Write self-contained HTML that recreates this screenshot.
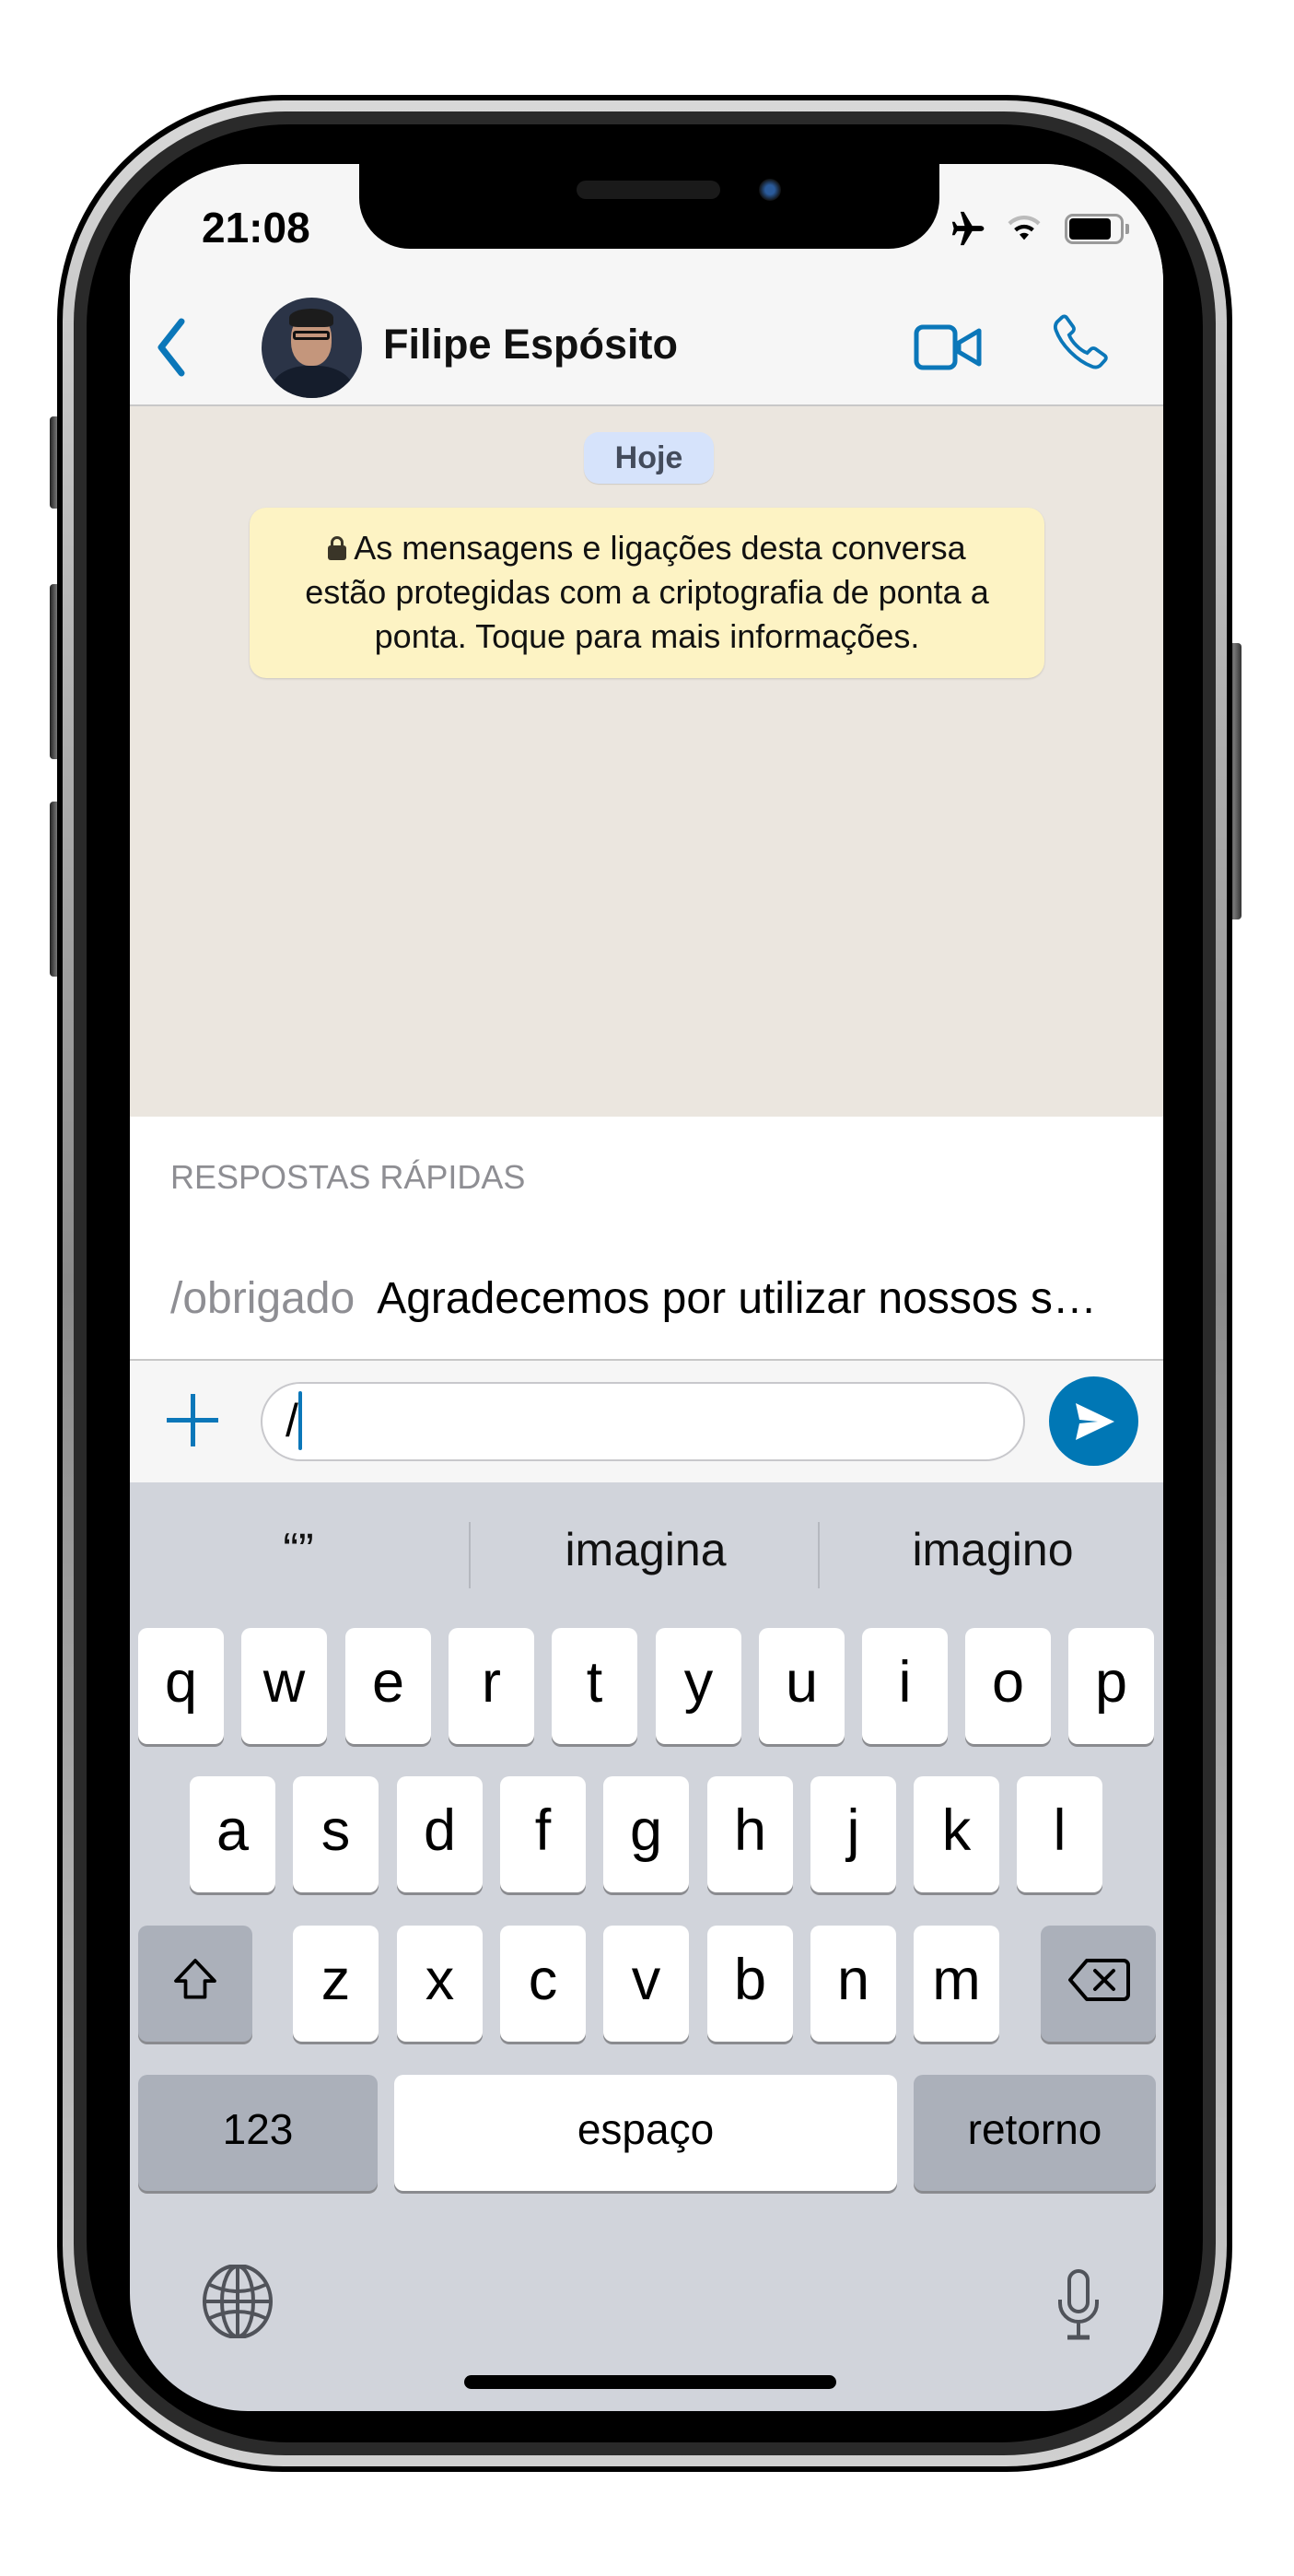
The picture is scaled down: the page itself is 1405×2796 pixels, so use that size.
<!DOCTYPE html>
<html><head><meta charset="utf-8"><style>
*{margin:0;padding:0;box-sizing:border-box}
body{width:1405px;height:2796px;background:#fff;position:relative;overflow:hidden;font-family:"Liberation Sans",sans-serif}
.a{position:absolute}
.btn{position:absolute;background:linear-gradient(90deg,#222,#777,#333);border-radius:4px}
.key{position:absolute;width:93px;height:126px;background:#fff;border-radius:10px;box-shadow:0 3px 0 #8a8b8f;font-size:63px;color:#000;text-align:center;line-height:118px}
.gk{background:#abb0ba}
.sug{position:absolute;top:1653px;font-size:50px;color:#111;text-align:center;width:370px}
</style></head><body>
<div class="btn" style="left:54px;top:452px;width:16px;height:100px"></div>
<div class="btn" style="left:54px;top:634px;width:16px;height:190px"></div>
<div class="btn" style="left:54px;top:870px;width:16px;height:190px"></div>
<div class="btn" style="left:1332px;top:698px;width:16px;height:300px"></div>
<div class="a" style="left:62px;top:103px;width:1276px;height:2580px;border-radius:245px;background:#000"></div>
<div class="a" style="left:68px;top:109px;width:1264px;height:2568px;border-radius:240px;background:linear-gradient(180deg,#d8d8d8,#8a8a8a 50%,#d0d0d0)"></div>
<div class="a" style="left:80px;top:121px;width:1240px;height:2544px;border-radius:230px;background:#2a2a2a"></div>
<div class="a" style="left:94px;top:135px;width:1212px;height:2516px;border-radius:220px;background:#000"></div>
<div class="a" style="left:141px;top:178px;width:1122px;height:2439px;border-radius:128px;overflow:hidden;background:#d1d4db">
  <div class="a" style="left:0;top:0;width:1122px;height:263px;background:#f6f6f6;border-bottom:2px solid #c8c8c8"></div>
  <div class="a" style="left:0;top:263px;width:1122px;height:771px;background:#ebe6df"></div>
  <div class="a" style="left:0;top:1034px;width:1122px;height:265px;background:#fff;border-bottom:2px solid #c8c8c8"></div>
  <div class="a" style="left:0;top:1299px;width:1122px;height:132px;background:#f6f6f6"></div>
</div>
<div class="a" style="left:390px;top:170px;width:630px;height:100px;background:#000;border-radius:0 0 55px 55px"></div>
<div class="a" style="left:626px;top:196px;width:156px;height:20px;background:#1a1a1a;border-radius:10px"></div>
<div class="a" style="left:824px;top:194px;width:24px;height:24px;background:radial-gradient(circle,#2a5a9a 30%,#111 70%);border-radius:50%"></div>
<div class="a" style="left:219px;top:220px;font-size:46px;font-weight:bold;color:#000">21:08</div>
<svg class="a" style="left:1030px;top:228px" width="44" height="40" viewBox="0 0 24 22"><path d="M21 11c0-1-1-1.6-2-1.6h-5L9 1H7l2.5 8.4H5L3.5 7H2l1 4-1 4h1.5L5 12.6h4.5L7 21h2l5-8.4h5c1 0 2-.6 2-1.6z" fill="#000"/></svg>
<svg class="a" style="left:1092px;top:230px" width="40" height="34" viewBox="0 0 24 20"><path d="M12 18l3-3.4a4.5 4.5 0 0 0-6 0z" fill="#000"/><path d="M5.5 10.7a9.5 9.5 0 0 1 13 0l-1.7 1.9a7 7 0 0 0-9.6 0z" fill="#000"/><path d="M1.5 6.5a15 15 0 0 1 21 0l-1.7 1.9a12.5 12.5 0 0 0-17.6 0z" fill="#bbb"/></svg>
<div class="a" style="left:1156px;top:232px;width:64px;height:33px;border:3px solid #999;border-radius:9px"></div>
<div class="a" style="left:1161px;top:237px;width:45px;height:23px;background:#000;border-radius:4px"></div>
<div class="a" style="left:1222px;top:243px;width:4px;height:11px;background:#999;border-radius:0 2px 2px 0"></div>
<svg class="a" style="left:165px;top:345px" width="40" height="64" viewBox="0 0 40 64"><path d="M32 4L10 32l22 28" stroke="#0b77b9" stroke-width="7" fill="none" stroke-linecap="round" stroke-linejoin="round"/></svg>
<div class="a" style="left:284px;top:323px;width:109px;height:109px;border-radius:50%;overflow:hidden;background:#2b3447">
  <div class="a" style="left:32px;top:18px;width:44px;height:56px;border-radius:45%;background:#c4967c"></div>
  <div class="a" style="left:30px;top:12px;width:48px;height:20px;border-radius:50% 50% 20% 20%;background:#1c1c1c"></div>
  <div class="a" style="left:34px;top:36px;width:40px;height:10px;border:3px solid #111;border-radius:3px"></div>
  <div class="a" style="left:10px;top:74px;width:90px;height:60px;border-radius:45% 45% 0 0;background:#151d2c"></div>
</div>
<div class="a" style="left:416px;top:348px;font-size:45px;font-weight:bold;color:#111">Filipe Espósito</div>
<svg class="a" style="left:992px;top:352px" width="76" height="50" viewBox="0 0 76 50"><rect x="3" y="3" width="42" height="44" rx="7" stroke="#0b77b9" stroke-width="5" fill="none"/><path d="M49 20l22-13v36L49 30z" stroke="#0b77b9" stroke-width="5" fill="none" stroke-linejoin="round"/></svg>
<svg class="a" style="left:1140px;top:338px" width="66" height="66" viewBox="0 0 24 24"><path d="M6.6 2.5l2.6 3.6c.4.6.3 1.4-.2 1.9L7.6 9.3c.9 2.6 4.3 6.1 7.1 7.1l1.4-1.4c.5-.5 1.3-.6 1.9-.2l3.6 2.6c.6.4.7 1.3.2 1.8l-1.7 1.9c-.9 1-2.4 1.2-3.6.6C10.7 19.5 4.5 13.3 2.4 7.5c-.5-1.2-.3-2.7.7-3.6l1.7-1.6c.5-.5 1.4-.4 1.8.2z" stroke="#0b77b9" stroke-width="1.4" fill="none"/></svg>
<div class="a" style="left:634px;top:469px;width:141px;height:56px;background:#d6e3fb;border-radius:16px;box-shadow:0 1px 1px rgba(0,0,0,.12);font-size:34px;font-weight:bold;color:#444c5c;text-align:center;line-height:56px">Hoje</div>
<div class="a" style="left:271px;top:551px;width:863px;height:185px;background:#fdf3c4;border-radius:18px;box-shadow:0 1px 2px rgba(0,0,0,.15);font-size:36px;color:#111;text-align:center;line-height:48px;padding-top:20px;white-space:nowrap">
<span style="display:inline-block;width:20px;height:26px;position:relative;margin-right:8px;vertical-align:-1px"><span class="a" style="left:3px;top:0;width:14px;height:16px;border:3px solid #3a3528;border-radius:7px 7px 0 0"></span><span class="a" style="left:0;top:10px;width:20px;height:16px;background:#3a3528;border-radius:3px"></span></span>As mensagens e ligações desta conversa<br>estão protegidas com a criptografia de ponta a<br>ponta. Toque para mais informações.</div>
<div class="a" style="left:185px;top:1257px;font-size:36px;color:#8e8e93">RESPOSTAS RÁPIDAS</div>
<div class="a" style="left:185px;top:1382px;font-size:48px;color:#8e8e93;white-space:nowrap">/obrigado&nbsp; <span style="color:#000">Agradecemos por utilizar nossos s…</span></div>
<div class="a" style="left:181px;top:1539px;width:56px;height:5px;background:#0b77b9"></div>
<div class="a" style="left:207px;top:1513px;width:5px;height:57px;background:#0b77b9"></div>
<div class="a" style="left:283px;top:1500px;width:830px;height:86px;background:#fff;border:2px solid #c8c8cc;border-radius:43px"></div>
<div class="a" style="left:310px;top:1513px;font-size:50px;color:#000">/</div>
<div class="a" style="left:324px;top:1510px;width:4px;height:64px;background:#0b77b9;border-radius:2px"></div>
<div class="a" style="left:1139px;top:1494px;width:97px;height:97px;background:#0077b5;border-radius:50%"></div>
<svg class="a" style="left:1160px;top:1515px" width="56" height="56" viewBox="0 0 56 56"><path d="M8 8l42 20L8 48l4-18 20-2-20-2z" fill="#fff"/></svg>
<div class="sug" style="left:139px">“”</div>
<div class="a" style="left:509px;top:1652px;width:2px;height:72px;background:#b5b8bf"></div>
<div class="sug" style="left:516px">imagina</div>
<div class="a" style="left:888px;top:1652px;width:2px;height:72px;background:#b5b8bf"></div>
<div class="sug" style="left:893px">imagino</div>
<div class="key" style="left:150px;top:1767px">q</div>
<div class="key" style="left:262px;top:1767px">w</div>
<div class="key" style="left:375px;top:1767px">e</div>
<div class="key" style="left:487px;top:1767px">r</div>
<div class="key" style="left:599px;top:1767px">t</div>
<div class="key" style="left:712px;top:1767px">y</div>
<div class="key" style="left:824px;top:1767px">u</div>
<div class="key" style="left:936px;top:1767px">i</div>
<div class="key" style="left:1048px;top:1767px">o</div>
<div class="key" style="left:1160px;top:1767px">p</div>
<div class="key" style="left:206px;top:1928px">a</div>
<div class="key" style="left:318px;top:1928px">s</div>
<div class="key" style="left:431px;top:1928px">d</div>
<div class="key" style="left:543px;top:1928px">f</div>
<div class="key" style="left:655px;top:1928px">g</div>
<div class="key" style="left:768px;top:1928px">h</div>
<div class="key" style="left:880px;top:1928px">j</div>
<div class="key" style="left:992px;top:1928px">k</div>
<div class="key" style="left:1104px;top:1928px">l</div>
<div class="key gk" style="left:150px;top:2090px;width:124px"><svg width="56" height="56" viewBox="0 0 24 24" style="vertical-align:middle;margin-top:-8px"><path d="M12 3L3 12.5h4.5V20h9v-7.5H21z" stroke="#000" stroke-width="1.6" fill="none" stroke-linejoin="round"/></svg></div>
<div class="key" style="left:318px;top:2090px">z</div>
<div class="key" style="left:431px;top:2090px">x</div>
<div class="key" style="left:543px;top:2090px">c</div>
<div class="key" style="left:655px;top:2090px">v</div>
<div class="key" style="left:768px;top:2090px">b</div>
<div class="key" style="left:880px;top:2090px">n</div>
<div class="key" style="left:992px;top:2090px">m</div>
<div class="key gk" style="left:1130px;top:2090px;width:125px"><svg width="70" height="50" viewBox="0 0 70 50" style="vertical-align:middle;margin-top:-8px"><path d="M22 4h40a5 5 0 0 1 5 5v32a5 5 0 0 1-5 5H22L4 25z" stroke="#000" stroke-width="4" fill="none" stroke-linejoin="round"/><path d="M31 15l20 20M51 15L31 35" stroke="#000" stroke-width="4" stroke-linecap="round"/></svg></div>
<div class="key gk" style="left:150px;top:2252px;width:260px;font-size:46px">123</div>
<div class="key" style="left:428px;top:2252px;width:546px;font-size:46px">espaço</div>
<div class="key gk" style="left:992px;top:2252px;width:263px;font-size:46px">retorno</div>
<svg class="a" style="left:218px;top:2458px" width="80" height="80" viewBox="0 0 80 80" fill="none" stroke="#50535a" stroke-width="4"><circle cx="40" cy="40" r="36" transform="scale(1 1.08) translate(0 -3)"/><ellipse cx="40" cy="40" rx="17" ry="38"/><path d="M40 2v76M4 40h72M10 22q30 14 60 0M10 58q30-14 60 0"/></svg>
<svg class="a" style="left:1145px;top:2462px" width="52" height="80" viewBox="0 0 52 80" fill="none" stroke="#50535a" stroke-width="4"><rect x="16" y="3" width="20" height="44" rx="10"/><path d="M6 34v4a20 20 0 0 0 40 0v-4M26 58v16"/><path d="M14 75h24" stroke-width="5"/></svg>
<div class="a" style="left:504px;top:2578px;width:404px;height:15px;background:#000;border-radius:8px"></div>
</body></html>
